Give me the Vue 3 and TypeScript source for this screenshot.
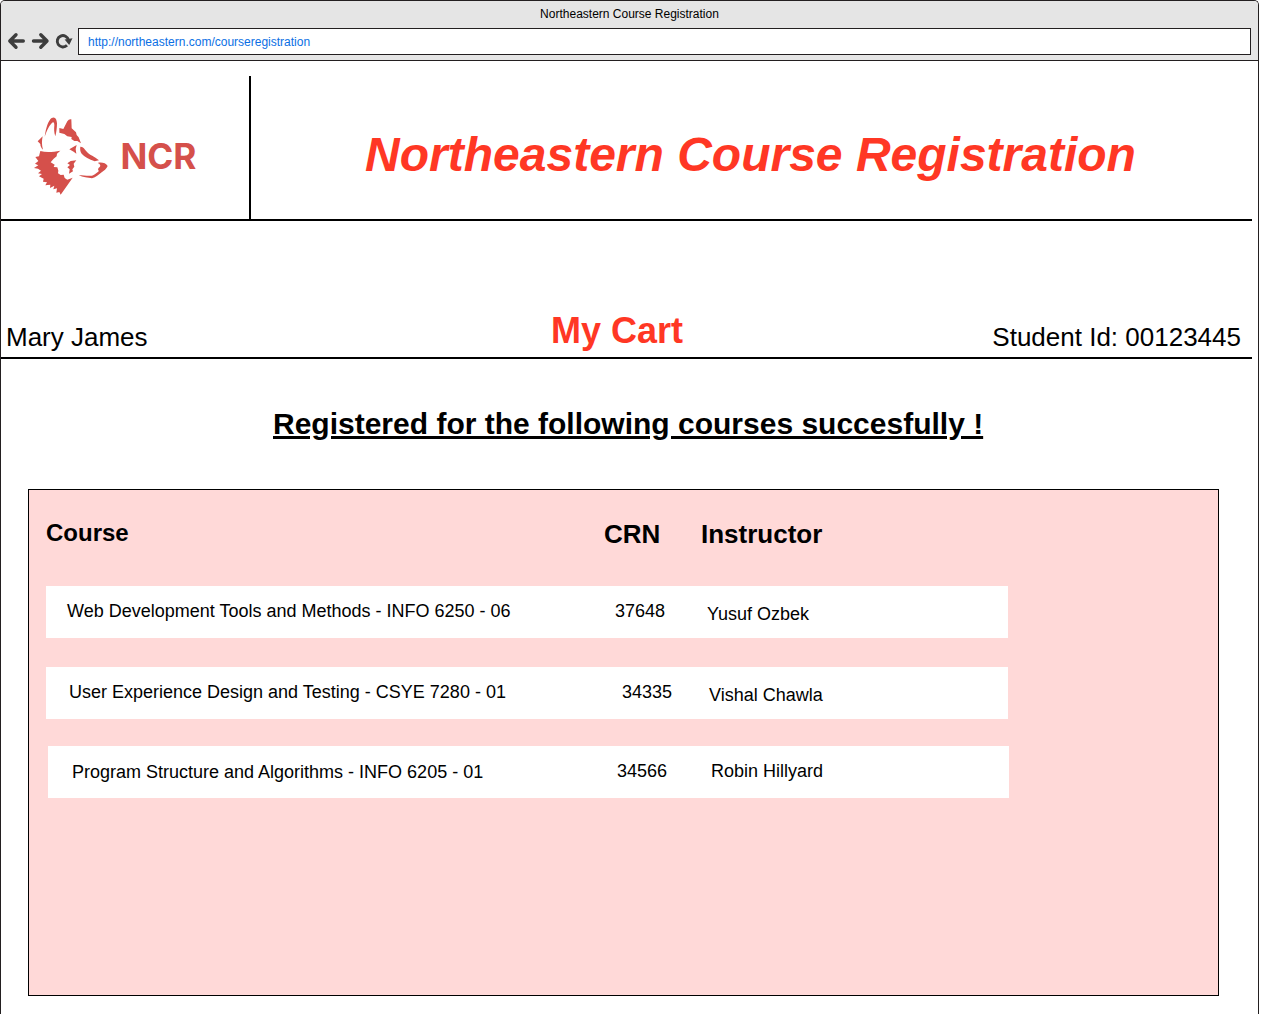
<script setup lang="ts">
interface Course {
  title: string
  crn: string
  instructor: string
}

const url = 'http://northeastern.com/courseregistration'
const siteTitle = 'Northeastern Course Registration'

const courses: Course[] = [
  { title: 'Web Development Tools and Methods - INFO 6250 - 06', crn: '37648', instructor: 'Yusuf Ozbek' },
  { title: 'User Experience Design and Testing - CSYE 7280 - 01', crn: '34335', instructor: 'Vishal Chawla' },
  { title: 'Program Structure and Algorithms - INFO 6205 - 01', crn: '34566', instructor: 'Robin Hillyard' },
]
</script>

<template>
  <div class="window">
    <header class="chrome">
      <div class="chrome-title">{{ siteTitle }}</div>
      <div class="toolbar">
        <svg class="nav" viewBox="0 0 72 26" width="72" height="26" fill="none" stroke="#3d3d3d">
          <g stroke-width="3.4" stroke-linecap="round" stroke-linejoin="round">
            <path d="M23.300 13H11M16 6.800L9.800 13l6.200 6.200" />
            <path d="M33.500 13h12.300M40.800 6.800L47 13l-6.200 6.200" />
          </g>
          <path d="M67 17.300A5.700 5.700 0 1 1 68.500 12" stroke-width="2.900" />
          <path d="M64.600 11.600l7.900-1.400-3.300 6.800z" fill="#3d3d3d" stroke="none" />
        </svg>
        <div class="address">{{ url }}</div>
      </div>
    </header>

    <main class="page">
      <section class="banner">
        <div class="brand">
          <svg viewBox="0 0 180 100" width="180" height="100" fill="#d5504b">
            <g transform="scale(.33333)">
              <path d="M62 92C66 65 73 43 83 36C93 31 98 38 99 52C99 66 97 79 94 91C90 80 90 70 91 58C91 49 88 46 83 52C73 62 68 76 62 92Z" />
              <path d="M41 106L56 91C53 105 53 117 57 131C52 126 49 121 49 114Z" />
              <path d="M106 66L118 69L130 46Q135 38 142 40L143 67L156 79L158 87L164 94L171 112L160 105L151 105L142 99L143 93L130 91L121 84L106 80Z" />
              <path d="M136 130L158 117L155 129L157 143L149 137Z" />
              <path d="M169 122C178 121 181 128 187 136C198 149 211 151 225 163L212 166C196 159 181 153 173 143C168 136 168 129 169 122Z" />
              <path d="M221 171C232 168 246 171 251 180C247 190 240 193 233 199C224 205 216 215 204 217C191 215 177 214 164 207C178 207 190 211 204 209C213 206 219 200 225 195C221 192 221 187 227 183C231 179 229 174 221 171Z" />
              <path d="M130 172L140 165L157 163L149 173L151 182L145 190L147 196L135 203L137 190L130 184L138 177Z" />
              <path d="M49 135C66 140 88 138 109 134L99 143L98 151L89 158L80 169L92 176L89 183L100 184L103 194L102 202L110 207L119 206L122 216L130 221L146 215L110 266L106 258L97 260L99 247L88 250L91 239L78 246L79 236L64 238L69 229L57 227L59 218L45 211L54 204L42 202L51 194L42 188L30 186L43 178L33 173L43 165L34 153L45 151Z" />
            </g>
            <text class="brand-name" x="96.500" y="62.500" textLength="76" lengthAdjust="spacingAndGlyphs">NCR</text>
          </svg>
        </div>
        <h1>{{ siteTitle }}</h1>
      </section>

      <section class="student-bar">
        <span class="student">Mary James</span>
        <h2>My Cart</h2>
        <span class="student-id">Student Id: 00123445</span>
      </section>

      <p class="message"><span>Registered for the following courses succesfully !</span></p>

      <section class="panel">
        <div class="headings">
          <strong class="heading-course">Course</strong>
          <strong class="heading-crn">CRN</strong>
          <strong class="heading-instructor">Instructor</strong>
        </div>
        <div v-for="course in courses" :key="course.crn" class="row">
          <span class="course">{{ course.title }}</span>
          <span class="crn">{{ course.crn }}</span>
          <span class="instructor">{{ course.instructor }}</span>
        </div>
      </section>
    </main>
  </div>
</template>

<style>
html,
body {
  background: #fff;
  overflow: hidden;
}
</style>

<style scoped>
.window {
  box-sizing: border-box;
  width: 1259px;
  height: 1014px;
  border: 1px solid #231f20;
  border-bottom: 0;
  border-radius: 5px 5px 0 0;
  overflow: hidden;
  background: #fff;
  color: #000;
  font-family: "Liberation Sans", Arial, sans-serif;
  white-space: nowrap;
}

.chrome {
  box-sizing: border-box;
  height: 60px;
  border-bottom: 1px solid #231f20;
  background: #e5e5e5;
  font-size: 12px;
}

.chrome-title {
  height: 27px;
  line-height: 26px;
  text-align: center;
}

.toolbar {
  display: flex;
  height: 27px;
  padding-right: 7px;
}

.nav {
  flex: none;
  margin-left: -1px;
  margin-right: 6px;
  overflow: visible;
}

.address {
  box-sizing: border-box;
  flex: 1;
  height: 27px;
  padding-left: 9px;
  border: 1px solid #231f20;
  background: #fff;
  color: #0b6fe4;
  line-height: 26px;
}

.banner {
  box-sizing: border-box;
  display: flex;
  width: 1251px;
  height: 160px;
  padding-top: 15px;
  border-bottom: 2px solid #000;
}

.brand {
  box-sizing: border-box;
  width: 250px;
  padding: 30px 0 0 23px;
  border-right: 2px solid #000;
}

.brand svg {
  display: block;
}

.brand-name {
  font: 700 35px Inter, "Open Sans", sans-serif;
}

h1 {
  flex: 1;
  margin: 0;
  padding: 52px 2px 0 0;
  color: #ff3724;
  font-size: 48px;
  font-style: italic;
  line-height: 53px;
  text-align: center;
}

.student-bar {
  box-sizing: border-box;
  display: flex;
  align-items: flex-start;
  justify-content: space-between;
  width: 1251px;
  height: 138px;
  padding: 89px 11px 0 5px;
  border-bottom: 2px solid #000;
  font-size: 26px;
  line-height: 30px;
}

.student,
.student-id {
  padding-top: 12px;
}

h2 {
  margin: 0 0 0 94px;
  color: #ff3724;
  font-size: 36px;
  line-height: 41px;
}

.message {
  margin: 0;
  padding: 47px 0 0 272px;
  font-size: 30px;
  font-weight: 700;
  line-height: 35px;
  text-decoration: underline;
}

.panel {
  box-sizing: border-box;
  width: 1191px;
  height: 507px;
  margin: 48px 0 0 27px;
  padding-left: 17px;
  border: 1px solid #000;
  background: #ffd9d8;
}

.headings {
  display: flex;
  height: 67px;
  padding-top: 29px;
  font-size: 26px;
  line-height: 30px;
}

.heading-course {
  width: 558px;
  font-size: 24px;
  line-height: 27px;
}

.heading-crn {
  width: 97px;
}

.row {
  box-sizing: border-box;
  display: flex;
  width: 962px;
  height: 52px;
  padding: 15px 0 0 21px;
  background: #fff;
  font-size: 18px;
  line-height: 20px;
}

.course {
  width: 548px;
}

.crn {
  width: 92px;
}

.instructor {
  padding-top: 3px;
}

.row:nth-child(3) {
  margin-top: 29px;
  padding-left: 23px;
}

.row:nth-child(3) .course {
  width: 553px;
}

.row:nth-child(3) .crn {
  width: 87px;
}

.row:nth-child(4) {
  width: 961px;
  margin: 27px 0 0 2px;
  padding-left: 24px;
}

.row:nth-child(4) .course {
  width: 545px;
  padding-top: 1px;
}

.row:nth-child(4) .crn {
  width: 94px;
}

.row:nth-child(4) .instructor {
  padding-top: 0;
}
</style>
